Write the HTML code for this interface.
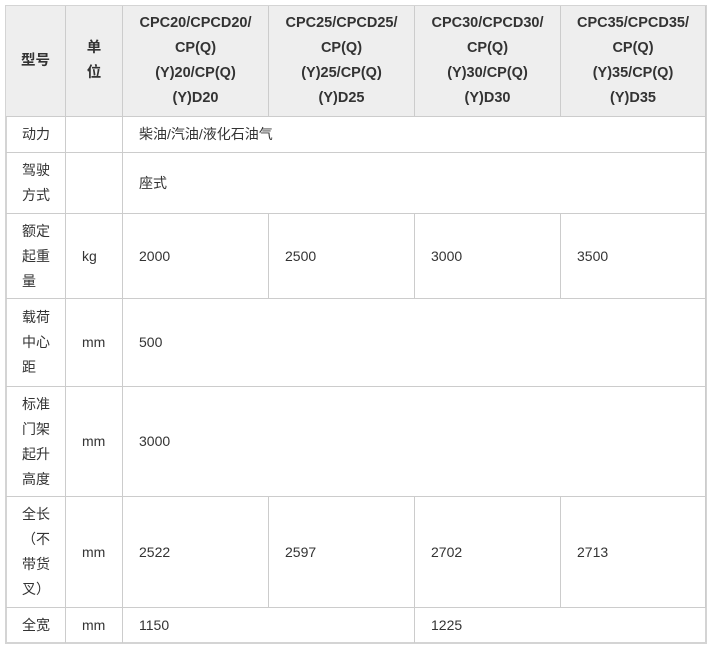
<!DOCTYPE html>
<html><head><meta charset="utf-8"><style>
body{margin:0;background:#fff;width:712px;height:651px;position:relative;font-family:"Liberation Sans","Noto Sans CJK SC",sans-serif;font-size:14px;color:#333;}
.c{position:absolute;box-sizing:border-box;border-right:1px solid #ccc;border-bottom:1px solid #ccc;display:flex;align-items:center;padding-left:16px;line-height:25px;}
.h{background:#eee;font-weight:bold;justify-content:center;text-align:center;padding:0 2px;font-size:14.5px;}
#t{position:absolute;left:5px;top:5px;width:702px;height:639px;border:2px solid #d4d4d4;box-sizing:border-box;}
</style></head><body>
<div id="t"></div>
<div class="c h" style="left:6px;top:6px;width:60px;height:111px">型号</div>
<div class="c h" style="left:66px;top:6px;width:57px;height:111px">单<br>位</div>
<div class="c h" style="left:123px;top:6px;width:146px;height:111px">CPC20/CPCD20/<br>CP(Q)<br>(Y)20/CP(Q)<br>(Y)D20</div>
<div class="c h" style="left:269px;top:6px;width:146px;height:111px">CPC25/CPCD25/<br>CP(Q)<br>(Y)25/CP(Q)<br>(Y)D25</div>
<div class="c h" style="left:415px;top:6px;width:146px;height:111px">CPC30/CPCD30/<br>CP(Q)<br>(Y)30/CP(Q)<br>(Y)D30</div>
<div class="c h" style="left:561px;top:6px;width:145px;height:111px">CPC35/CPCD35/<br>CP(Q)<br>(Y)35/CP(Q)<br>(Y)D35</div>

<div class="c" style="left:6px;top:117px;width:60px;height:36px">动力</div>
<div class="c" style="left:66px;top:117px;width:57px;height:36px"></div>
<div class="c" style="left:123px;top:117px;width:583px;height:36px">柴油/汽油/液化石油气</div>

<div class="c" style="left:6px;top:153px;width:60px;height:61px">驾驶<br>方式</div>
<div class="c" style="left:66px;top:153px;width:57px;height:61px"></div>
<div class="c" style="left:123px;top:153px;width:583px;height:61px">座式</div>

<div class="c" style="left:6px;top:214px;width:60px;height:85px">额定<br>起重<br>量</div>
<div class="c" style="left:66px;top:214px;width:57px;height:85px">kg</div>
<div class="c" style="left:123px;top:214px;width:146px;height:85px">2000</div>
<div class="c" style="left:269px;top:214px;width:146px;height:85px">2500</div>
<div class="c" style="left:415px;top:214px;width:146px;height:85px">3000</div>
<div class="c" style="left:561px;top:214px;width:145px;height:85px">3500</div>

<div class="c" style="left:6px;top:299px;width:60px;height:88px">载荷<br>中心<br>距</div>
<div class="c" style="left:66px;top:299px;width:57px;height:88px">mm</div>
<div class="c" style="left:123px;top:299px;width:583px;height:88px">500</div>

<div class="c" style="left:6px;top:387px;width:60px;height:110px">标准<br>门架<br>起升<br>高度</div>
<div class="c" style="left:66px;top:387px;width:57px;height:110px">mm</div>
<div class="c" style="left:123px;top:387px;width:583px;height:110px">3000</div>

<div class="c" style="left:6px;top:497px;width:60px;height:111px">全长<br>（不<br>带货<br>叉）</div>
<div class="c" style="left:66px;top:497px;width:57px;height:111px">mm</div>
<div class="c" style="left:123px;top:497px;width:146px;height:111px">2522</div>
<div class="c" style="left:269px;top:497px;width:146px;height:111px">2597</div>
<div class="c" style="left:415px;top:497px;width:146px;height:111px">2702</div>
<div class="c" style="left:561px;top:497px;width:145px;height:111px">2713</div>

<div class="c" style="left:6px;top:608px;width:60px;height:35px;border-bottom:none">全宽</div>
<div class="c" style="left:66px;top:608px;width:57px;height:35px;border-bottom:none">mm</div>
<div class="c" style="left:123px;top:608px;width:292px;height:35px;border-bottom:none">1150</div>
<div class="c" style="left:415px;top:608px;width:291px;height:35px;border-bottom:none;border-right:none">1225</div>
</body></html>
